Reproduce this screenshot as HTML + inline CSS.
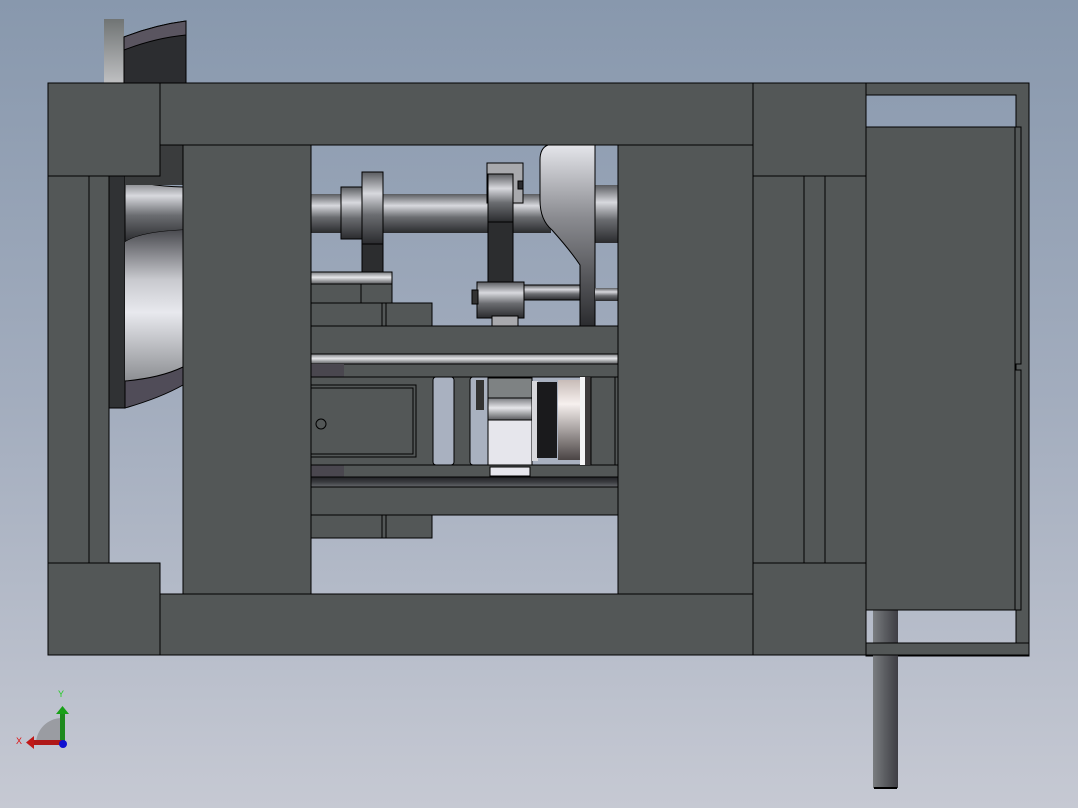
<!DOCTYPE html>
<html><head><meta charset="utf-8"><style>
html,body{margin:0;padding:0;width:1078px;height:808px;overflow:hidden}
svg{display:block}
</style></head><body>
<svg width="1078" height="808" viewBox="0 0 1078 808" xmlns="http://www.w3.org/2000/svg">
<defs>
<linearGradient id="bg" x1="0" y1="0" x2="0" y2="1"><stop offset="0" stop-color="#8898ad"/><stop offset="0.5" stop-color="#a3adbe"/><stop offset="1" stop-color="#c6c9d3"/></linearGradient>
<linearGradient id="shaft" x1="0" y1="0" x2="0" y2="1"><stop offset="0" stop-color="#5a5c60"/><stop offset="0.3" stop-color="#d8d9de"/><stop offset="0.6" stop-color="#6a6c70"/><stop offset="1" stop-color="#2a2b2e"/></linearGradient>
<linearGradient id="shaftlt" x1="0" y1="0" x2="0" y2="1"><stop offset="0" stop-color="#7a7c80"/><stop offset="0.45" stop-color="#e6e7ea"/><stop offset="1" stop-color="#58595c"/></linearGradient>
<linearGradient id="shaftdk" x1="0" y1="0" x2="0" y2="1"><stop offset="0" stop-color="#222326"/><stop offset="0.5" stop-color="#3a3b3f"/><stop offset="1" stop-color="#66686c"/></linearGradient>
<linearGradient id="cam" x1="0" y1="0" x2="0" y2="1"><stop offset="0" stop-color="#e4e5ea"/><stop offset="0.4" stop-color="#8a8b90"/><stop offset="1" stop-color="#2a2b2e"/></linearGradient>
<linearGradient id="wheel" x1="0" y1="0" x2="0" y2="1"><stop offset="0" stop-color="#4a4b50"/><stop offset="0.3" stop-color="#c8c9ce"/><stop offset="0.5" stop-color="#e8e9ee"/><stop offset="1" stop-color="#7a7c80"/></linearGradient>
<linearGradient id="rod" x1="0" y1="0" x2="1" y2="0"><stop offset="0" stop-color="#7a7d80"/><stop offset="0.5" stop-color="#5a5c60"/><stop offset="1" stop-color="#3e3e44"/></linearGradient>
<linearGradient id="piston" x1="0" y1="0" x2="0" y2="1"><stop offset="0" stop-color="#c8bcb8"/><stop offset="0.3" stop-color="#f6f0ee"/><stop offset="1" stop-color="#4a4444"/></linearGradient>
<linearGradient id="hw" x1="0" y1="0" x2="0" y2="1"><stop offset="0" stop-color="#707474"/><stop offset="1" stop-color="#bfc0c2"/></linearGradient>
</defs>
<rect width="1078" height="808" fill="url(#bg)"/>
<g stroke="#000" stroke-width="1">
<!-- top handwheel -->
<rect x="104" y="19" width="20" height="64" fill="url(#hw)" stroke="none"/>
<path d="M124 37 Q155 25 186 21 L186 83 L124 83 Z" fill="#2c2d30"/>
<path d="M124 37 Q155 25 186 21 L186 35 Q155 38 124 50 Z" fill="#5a5560"/>
<!-- left wheel behind -->
<rect x="109" y="160" width="16" height="248" fill="#303234"/>
<path d="M125 176 Q140 186 183 187 L183 230 Q140 232 125 242 Z" fill="url(#shaft)"/>
<path d="M125 242 Q140 232 183 230 L183 378 Q150 392 125 395 Z" fill="url(#wheel)" stroke="none"/>
<path d="M125 381 Q160 378 183 367 L183 385 Q160 398 125 408 Z" fill="#504c58"/>
<rect x="125" y="145" width="58" height="40" fill="#3a3c3d" stroke="none"/>
<!-- center mechanism -->
<rect x="595" y="185" width="23" height="58" fill="url(#shaft)" stroke="none"/>
<rect x="311" y="194" width="240" height="39" fill="url(#shaft)" stroke="none"/>
<rect x="341" y="187" width="22" height="52" fill="url(#shaft)"/>
<rect x="362" y="172" width="21" height="72" fill="url(#shaft)"/>
<rect x="362" y="244" width="21" height="28" fill="#2c2d2f"/>
<rect x="311" y="272" width="81" height="12" fill="url(#shaftlt)"/>
<rect x="311" y="284" width="81" height="19" fill="#535757"/>
<line x1="361" y1="284" x2="361" y2="303"/>
<rect x="311" y="303" width="121" height="23" fill="#535757"/>
<line x1="382" y1="303" x2="382" y2="326"/><line x1="386" y1="303" x2="386" y2="326"/>
<!-- cam -->
<path d="M548 145 L595 145 L595 327 L580 327 L580 265 Q570 250 552 230 Q540 220 540 200 L540 160 Q540 148 548 145 Z" fill="url(#cam)"/>
<rect x="595" y="288" width="23" height="13" fill="url(#shaft)" stroke="none"/>
<!-- arm -->
<rect x="487" y="163" width="36" height="40" fill="#a8a9ad"/>
<rect x="518" y="181" width="5" height="8" fill="#2c2d30"/>
<rect x="488" y="174" width="25" height="48" fill="url(#shaft)"/>
<rect x="488" y="222" width="25" height="62" fill="#2c2d2f"/>
<rect x="493" y="285" width="87" height="15" fill="url(#shaft)"/>
<rect x="477" y="282" width="47" height="36" fill="url(#shaft)"/>
<rect x="472" y="290" width="6" height="14" fill="#333"/>
<rect x="492" y="316" width="26" height="10" fill="#a8a9ad"/>
<!-- bars -->
<rect x="311" y="326" width="307" height="28" fill="#535757"/>
<rect x="311" y="354" width="307" height="10" fill="url(#shaftlt)"/>
<rect x="311" y="364" width="307" height="113" fill="#535757"/>
<rect x="311" y="364" width="33" height="13" fill="#4a474f" stroke="none"/>
<rect x="311" y="465" width="33" height="12" fill="#4a474f" stroke="none"/>
<line x1="311" y1="377" x2="618" y2="377"/>
<line x1="311" y1="465" x2="618" y2="465"/>
<rect x="311" y="385" width="105" height="72" fill="#535757"/>
<rect x="311" y="388" width="102" height="66" fill="#535757"/>
<circle cx="321" cy="424" r="5" fill="none"/>
<rect x="433" y="377" width="21" height="88" rx="3" fill="#a9b1c0"/>
<rect x="470" y="377" width="145" height="88" rx="3" fill="#a9b1c0"/>
<rect x="488" y="378" width="44" height="20" fill="#7e8283"/>
<rect x="488" y="398" width="44" height="22" fill="url(#shaftlt)"/>
<rect x="488" y="420" width="44" height="45" fill="#e6e6ec"/>
<rect x="490" y="467" width="40" height="9" fill="#e6e6ec"/>
<rect x="532" y="381" width="6" height="80" fill="#d8d8dc" stroke="none"/>
<rect x="537" y="382" width="20" height="76" fill="#1a1a1c" stroke="none"/>
<rect x="558" y="380" width="22" height="80" fill="url(#piston)" stroke="none"/>
<rect x="580" y="377" width="10" height="88" fill="#f4f4f6" stroke="none"/>
<rect x="585" y="377" width="6" height="88" fill="#3e3b3d" stroke="none"/>
<rect x="591" y="377" width="24" height="88" fill="#535757"/>
<rect x="476" y="380" width="8" height="30" fill="#333" stroke="none"/>
<rect x="311" y="477" width="307" height="10" fill="url(#shaftdk)"/>
<rect x="311" y="487" width="307" height="28" fill="#535757"/>
<rect x="311" y="515" width="121" height="23" fill="#535757"/>
<line x1="382" y1="515" x2="382" y2="538"/><line x1="386" y1="515" x2="386" y2="538"/>
<!-- main frame -->
<rect x="183" y="145" width="128" height="449" fill="#535757"/>
<rect x="618" y="145" width="135" height="449" fill="#535757"/>
<rect x="48" y="176" width="41" height="387" fill="#535757"/>
<rect x="89" y="176" width="20" height="387" fill="#535757"/>
<rect x="160" y="83" width="593" height="62" fill="#535757"/>
<rect x="160" y="594" width="593" height="61" fill="#535757"/>
<rect x="753" y="176" width="51" height="387" fill="#535757"/>
<rect x="804" y="176" width="21" height="387" fill="#535757"/>
<rect x="825" y="176" width="41" height="387" fill="#535757"/>
<rect x="48" y="83" width="112" height="93" fill="#535757"/>
<rect x="753" y="83" width="113" height="93" fill="#535757"/>
<rect x="48" y="563" width="112" height="92" fill="#535757"/>
<rect x="753" y="563" width="113" height="92" fill="#535757"/>
<!-- right frame -->
<path d="M866 83 H1029 V656 H866 Z M866 95 V643 H1016 V95 Z" fill="#535757" fill-rule="evenodd"/>
<rect x="873" y="610" width="25" height="178" fill="url(#rod)" stroke="none"/>
<line x1="874" y1="788" x2="897" y2="788" stroke-width="2"/>
<rect x="866" y="643" width="163" height="12" fill="#535757"/>
<rect x="866" y="127" width="149" height="483" fill="#535757"/>
<rect x="1015" y="127" width="6" height="237" fill="#535757"/>
<rect x="1015" y="370" width="6" height="240" fill="#535757"/>
</g>
<!-- axes -->
<path d="M36 744 A26 26 0 0 1 62 718 L62 744 Z" fill="#9a9ca2"/>
<rect x="60" y="712" width="5" height="32" fill="#1e8a1e"/>
<path d="M56 714 L62.5 706 L69 714 Z" fill="#18a018"/>
<rect x="32" y="740" width="30" height="5" fill="#b01818"/>
<path d="M34 736 L26 742.5 L34 749 Z" fill="#c01818"/>
<circle cx="63" cy="744" r="4" fill="#1010d0"/>
<text x="58" y="697" font-family="Liberation Sans, sans-serif" font-size="9" fill="#22cc22">Y</text>
<text x="16" y="744" font-family="Liberation Sans, sans-serif" font-size="9" fill="#dd1111">X</text>
</svg>
</body></html>
